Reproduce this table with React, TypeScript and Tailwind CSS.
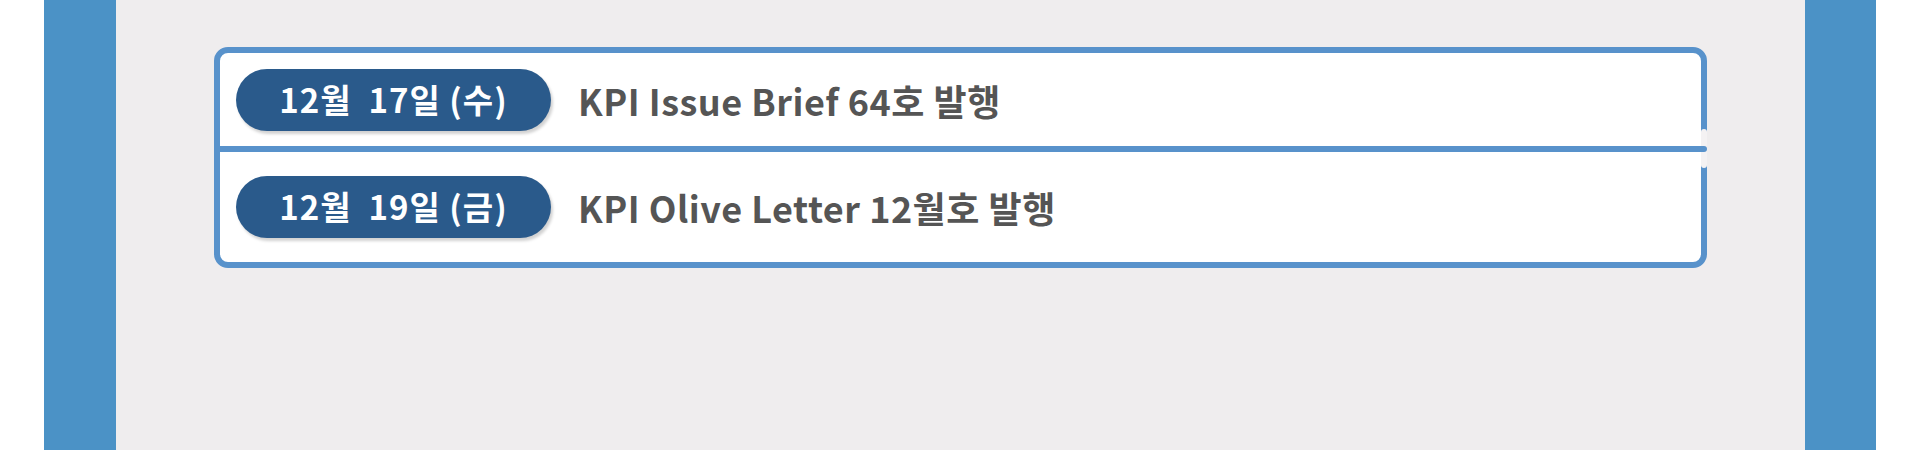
import React from 'react';

const items = [
  { date: '12월\u00a0\u00a017일 (수)', title: 'KPI Issue Brief 64호 발행', h: 'h-[93px]' },
  { date: '12월\u00a0\u00a019일 (금)', title: 'KPI Olive Letter 12월호 발행', h: 'h-[110px]' },
];

function Row({ date, title, h }: { date: string; title: string; h: string }) {
  return (
    <div className={`${h} flex items-center`}>
      <div className="ml-[16px] w-[315px] h-[62px] rounded-full bg-[#2a5a8b] text-white font-bold text-[33px] flex items-center justify-center shadow-[2px_3px_3px_rgba(0,0,0,0.18)] tracking-[1px]">
        {date}
      </div>
      <div className="ml-[27px] text-[#555555] font-bold text-[36px] tracking-[0.5px]">{title}</div>
    </div>
  );
}

export default function App() {
  return (
    <div className="w-full h-[450px] flex bg-white font-['Noto_Sans_CJK_KR','Noto_Sans',sans-serif]">
      <div className="w-[44px] shrink-0" />
      <div className="w-[72px] shrink-0 bg-[#4b92c6]" />

      {/* Notice area */}
      <div className="flex-1 bg-[#efedee] pl-[98px] pt-[47px]">
        <div className="relative w-[1493px] border-[6px] border-[#5892cb] rounded-[14px] bg-white">
          <Row {...items[0]} />
          <div className="relative z-10 h-[6px] -mr-[6px] bg-[#5892cb] rounded-r-full" />
          <Row {...items[1]} />
          {/* break in the right edge */}
          <div className="absolute -right-[6px] top-[76px] w-[6px] h-[39px] bg-[#f4f2f3] rounded-full" />
        </div>
      </div>

      <div className="w-[71px] shrink-0 bg-[#4b92c6]" />
      <div className="w-[44px] shrink-0" />
    </div>
  );
}
